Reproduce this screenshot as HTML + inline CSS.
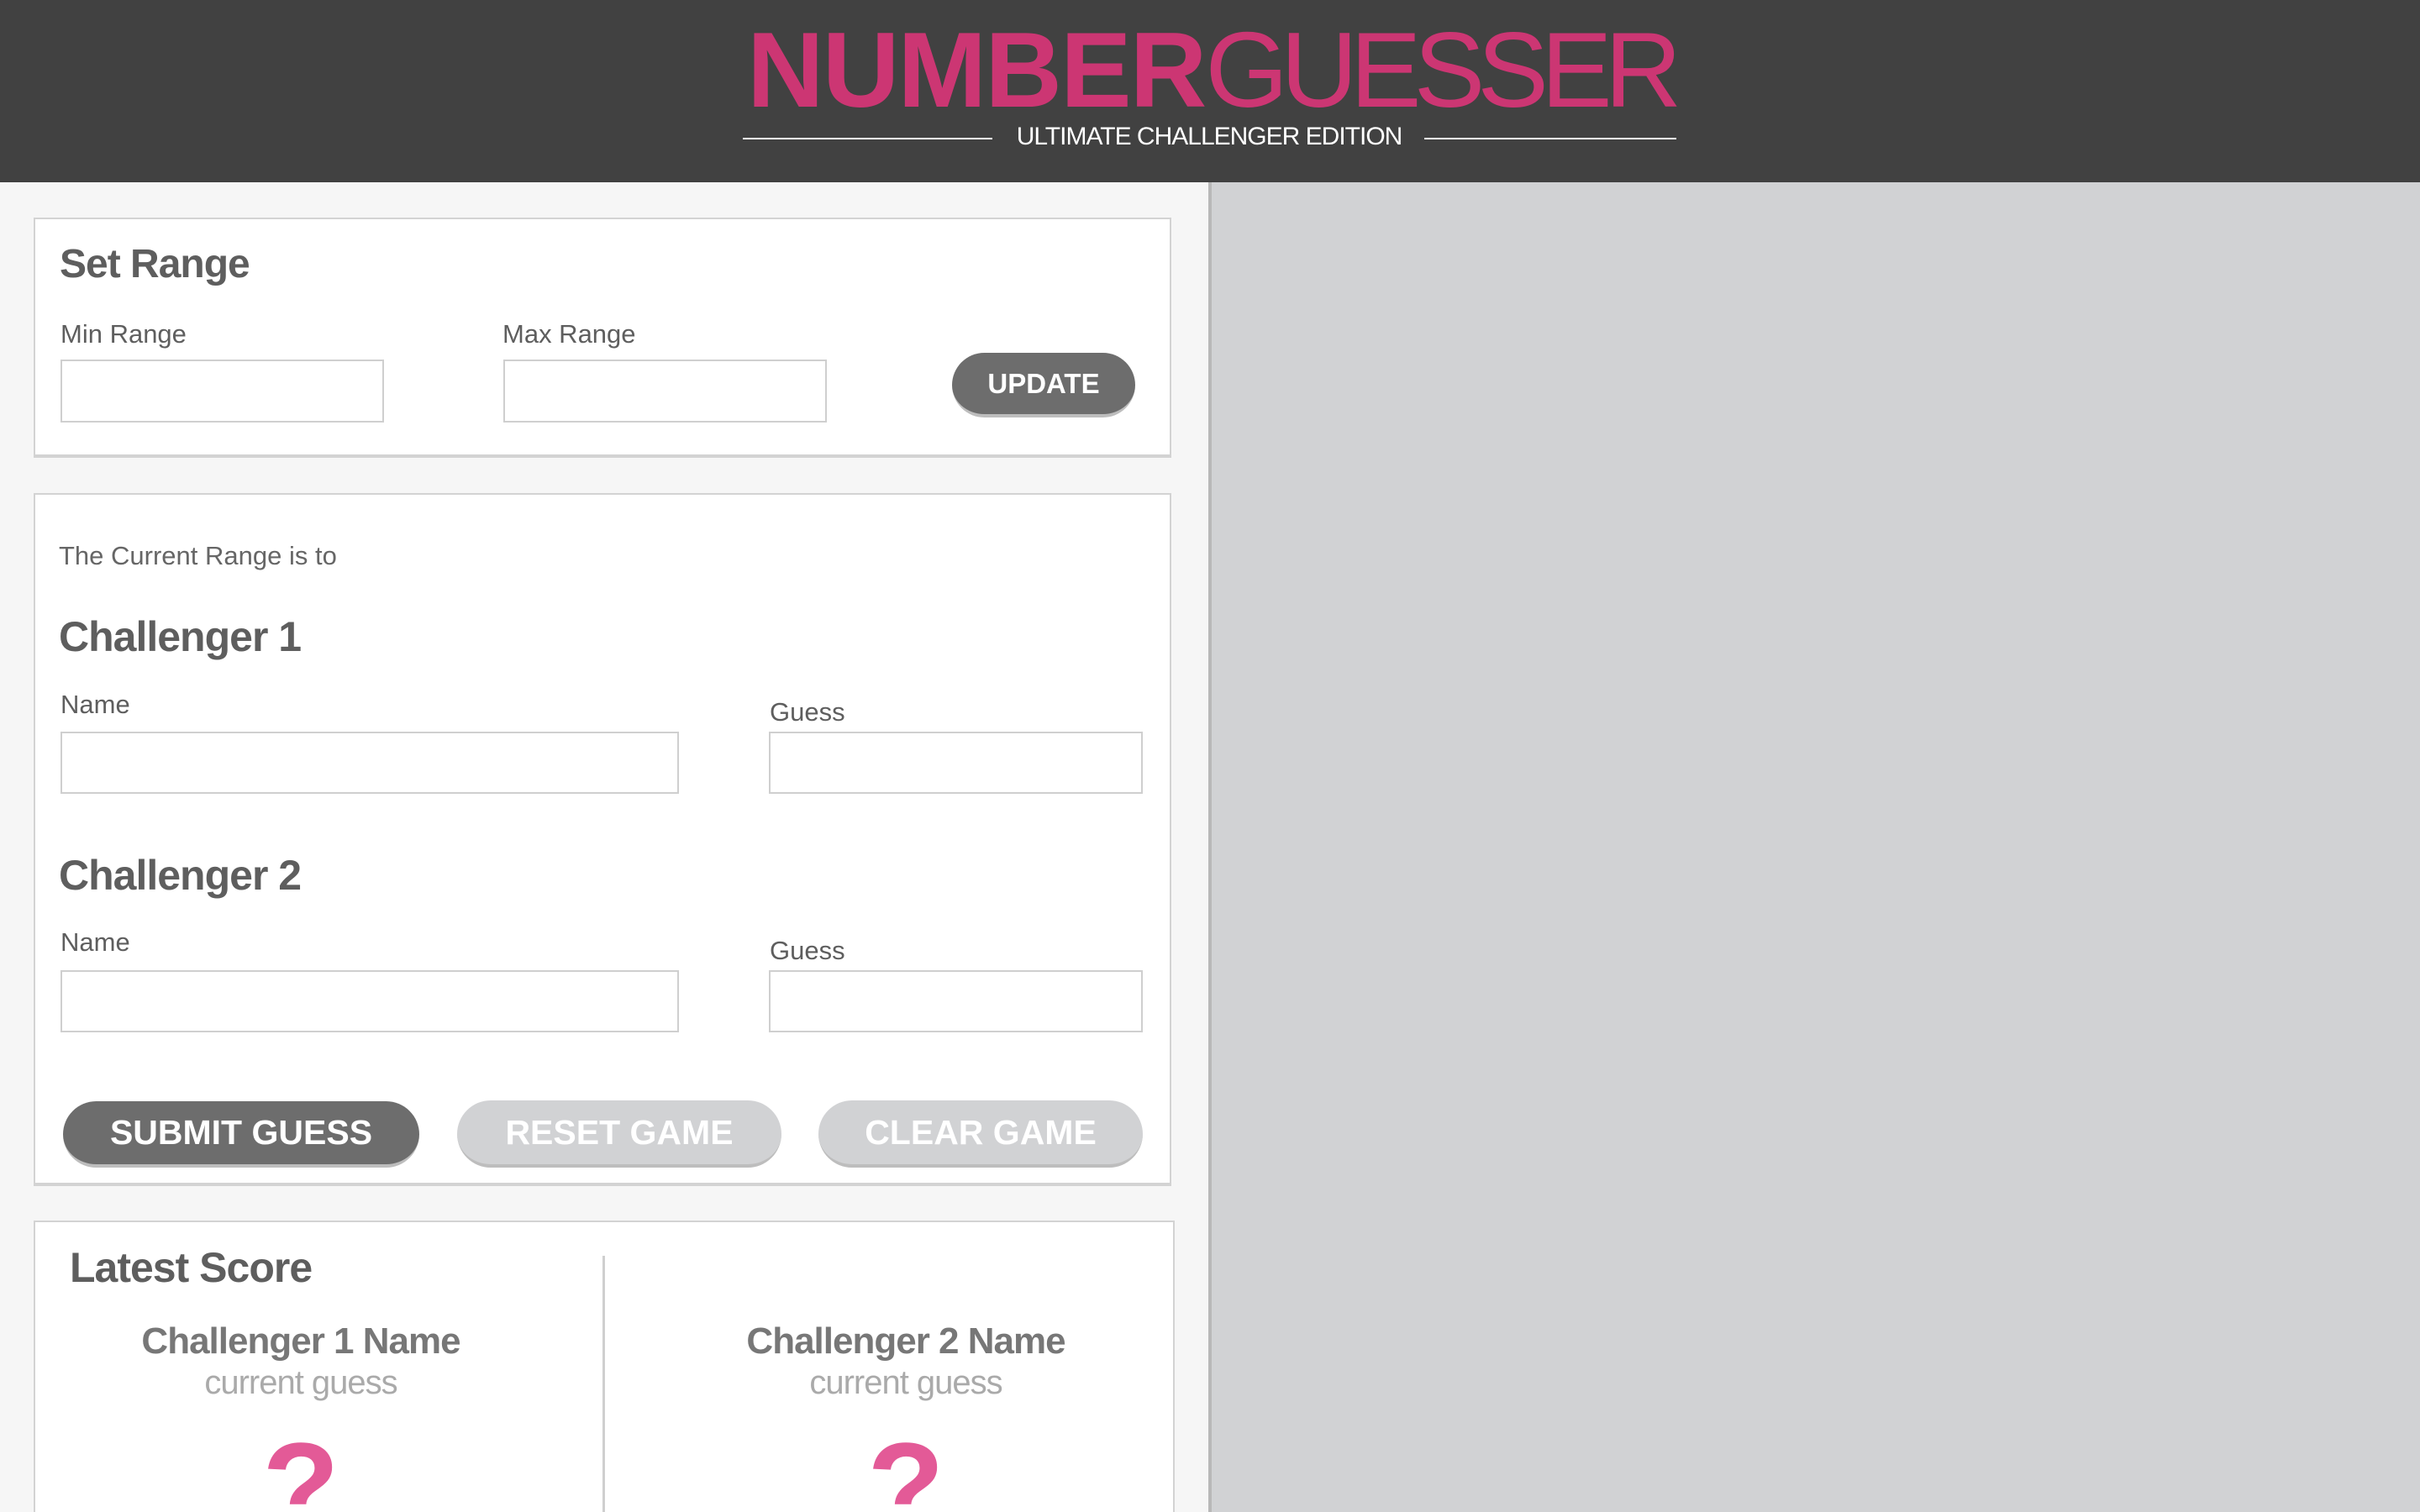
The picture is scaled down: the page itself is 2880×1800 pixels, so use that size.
<!DOCTYPE html>
<html style="overflow:hidden;height:1800px"><head><meta charset="utf-8"><style>
*{margin:0;padding:0;box-sizing:border-box}
body{width:2880px;height:1800px;overflow:hidden;background:#f6f6f6;font-family:"Liberation Sans",sans-serif;position:relative}
.a{position:absolute;white-space:nowrap}
.hdr{left:0;top:0;width:2880px;height:217px;background:#414141}
.right{left:1438px;top:217px;width:1442px;height:1583px;background:#d1d2d4;border-left:4px solid #b8b8b8}
.card{position:absolute;background:#fff;border:2px solid #d3d3d3;border-bottom-width:4px}
.h{font-weight:bold;color:#5e5e5e;font-size:48px;letter-spacing:-1px}
.lbl{color:#5e5e5e;font-size:31px}
.in{position:absolute;border:2px solid #cfcfcf;background:#fff}
.btn{position:absolute;border-radius:40px;color:#fff;font-weight:bold;text-align:center;border-bottom:4px solid #bdbdbd}
</style></head><body>
<div class="a hdr"></div>
<div class="a" style="left:889px;top:18px;font-size:127px;line-height:130px;color:#cc3673"><span style="font-weight:bold;letter-spacing:-2px">NUMBER</span><span style="letter-spacing:-9px">GUESSER</span></div>
<div class="a" style="left:884px;top:164px;width:297px;height:2px;background:#fff"></div>
<div class="a" style="left:1695px;top:164px;width:300px;height:2px;background:#fff"></div>
<div class="a" style="left:1200px;top:146px;width:478px;text-align:center;color:#fff;font-size:30px;letter-spacing:-1px">ULTIMATE CHALLENGER EDITION</div>
<div class="a right"></div>

<div class="card" style="left:40px;top:259px;width:1354px;height:286px"></div>
<div class="a h" style="left:71px;top:287px">Set Range</div>
<div class="a lbl" style="left:72px;top:380px">Min Range</div>
<div class="a lbl" style="left:598px;top:380px">Max Range</div>
<div class="in" style="left:72px;top:428px;width:385px;height:75px"></div>
<div class="in" style="left:599px;top:428px;width:385px;height:75px"></div>
<div class="btn" style="left:1133px;top:420px;width:218px;height:77px;background:#6d6d6d;font-size:33px;line-height:73px">UPDATE</div>

<div class="card" style="left:40px;top:587px;width:1354px;height:825px"></div>
<div class="a" style="left:70px;top:644px;font-size:31px;color:#666">The Current Range is to</div>
<div class="a h" style="left:70px;top:729px;font-size:50px">Challenger 1</div>
<div class="a lbl" style="left:72px;top:821px">Name</div>
<div class="a lbl" style="left:916px;top:830px">Guess</div>
<div class="in" style="left:72px;top:871px;width:736px;height:74px"></div>
<div class="in" style="left:915px;top:871px;width:445px;height:74px"></div>
<div class="a h" style="left:70px;top:1013px;font-size:50px">Challenger 2</div>
<div class="a lbl" style="left:72px;top:1104px">Name</div>
<div class="a lbl" style="left:916px;top:1114px">Guess</div>
<div class="in" style="left:72px;top:1155px;width:736px;height:74px"></div>
<div class="in" style="left:915px;top:1155px;width:445px;height:74px"></div>
<div class="btn" style="left:75px;top:1311px;width:424px;height:79px;background:#6d6d6d;font-size:41px;line-height:75px">SUBMIT GUESS</div>
<div class="btn" style="left:544px;top:1310px;width:386px;height:80px;background:#d1d2d4;font-size:41px;line-height:76px">RESET GAME</div>
<div class="btn" style="left:974px;top:1310px;width:386px;height:80px;background:#d1d2d4;font-size:41px;line-height:76px">CLEAR GAME</div>

<div class="card" style="left:40px;top:1453px;width:1358px;height:347px;border-bottom:none"></div>
<div class="a h" style="left:83px;top:1480px;font-size:50px">Latest Score</div>
<div class="a" style="left:717px;top:1495px;width:3px;height:305px;background:#cfcfcf"></div>
<div class="a" style="left:80px;top:1572px;width:556px;text-align:center;font-weight:bold;font-size:44px;color:#777;letter-spacing:-1px">Challenger 1 Name</div>
<div class="a" style="left:80px;top:1624px;width:556px;text-align:center;font-size:40px;color:#aaa;letter-spacing:-1px">current guess</div>
<div class="a" style="left:80px;top:1690px;width:556px;height:110px;overflow:hidden;text-align:center;font-weight:bold;font-size:150px;line-height:160px;color:#e35a97">?</div>
<div class="a" style="left:800px;top:1572px;width:556px;text-align:center;font-weight:bold;font-size:44px;color:#777;letter-spacing:-1px">Challenger 2 Name</div>
<div class="a" style="left:800px;top:1624px;width:556px;text-align:center;font-size:40px;color:#aaa;letter-spacing:-1px">current guess</div>
<div class="a" style="left:800px;top:1690px;width:556px;height:110px;overflow:hidden;text-align:center;font-weight:bold;font-size:150px;line-height:160px;color:#e35a97">?</div>
</body></html>
